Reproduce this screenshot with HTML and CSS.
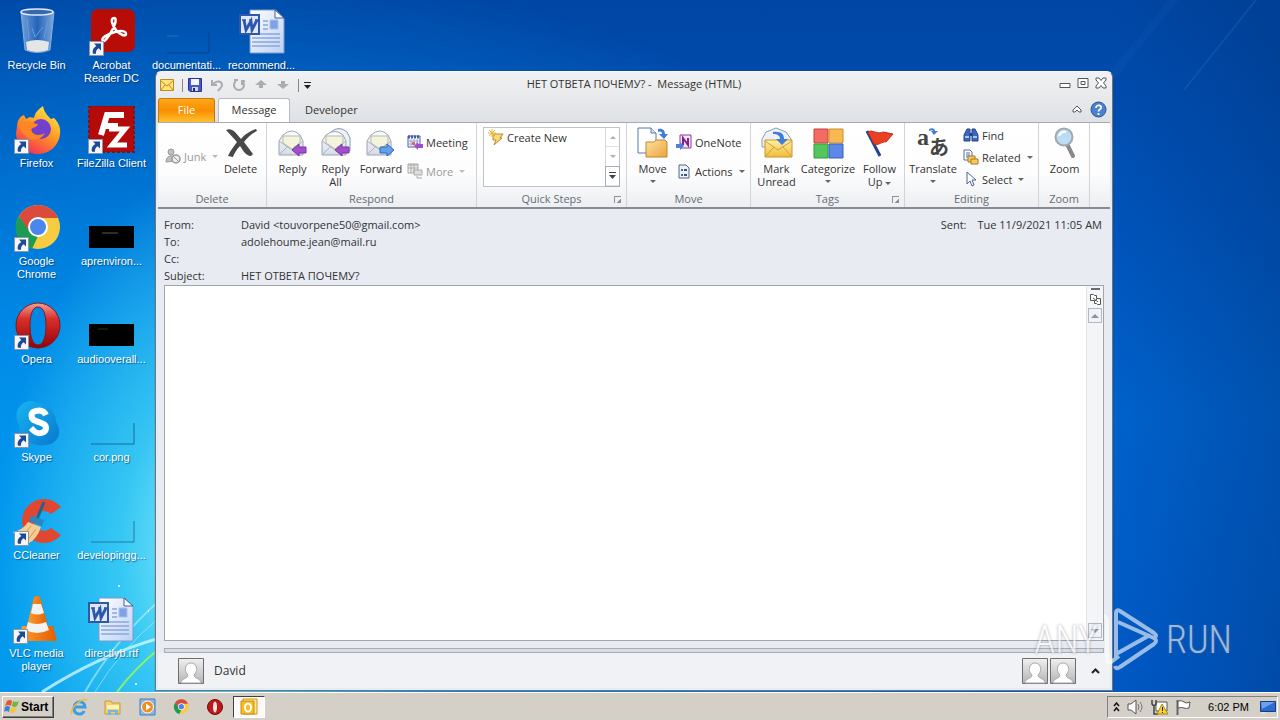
FILE: index.html
```html
<!DOCTYPE html>
<html lang="en">
<head>
  <meta charset="UTF-8">
  <title>НЕТ ОТВЕТА ПОЧЕМУ? - Message (HTML)</title>
  <meta name="viewport" content="width=device-width, initial-scale=1">
  <link rel="stylesheet" href="styles.css">
</head>
<body>

<!-- shared icons -->
<svg class="sprite" aria-hidden="true">
  <defs>
    <linearGradient id="gEnv" x1="0" y1="0" x2="0" y2="1"><stop offset="0" stop-color="#fff"/><stop offset="1" stop-color="#d5dbe6"/></linearGradient>
    <linearGradient id="gGold" x1="0" y1="0" x2="0" y2="1"><stop offset="0" stop-color="#fff0a0"/><stop offset="1" stop-color="#efbd3c"/></linearGradient>
    <linearGradient id="gFolder" x1="0" y1="0" x2="1" y2="1"><stop offset="0" stop-color="#ffe2a0"/><stop offset="1" stop-color="#e9a43c"/></linearGradient>
    <linearGradient id="gOpera" x1="0" y1="0" x2="0" y2="1"><stop offset="0" stop-color="#f0a09a"/><stop offset=".35" stop-color="#d8302a"/><stop offset="1" stop-color="#96000a"/></linearGradient>
    <linearGradient id="gSkype" x1="0" y1="0" x2="1" y2="1"><stop offset="0" stop-color="#18b4f0"/><stop offset="1" stop-color="#0878d0"/></linearGradient>
    <linearGradient id="gFox" x1=".8" y1="0" x2=".2" y2="1"><stop offset="0" stop-color="#fff04a"/><stop offset=".45" stop-color="#ff9a22"/><stop offset="1" stop-color="#f5265a"/></linearGradient>
    <linearGradient id="gCone" x1="0" y1="0" x2="1" y2="0"><stop offset="0" stop-color="#ffa030"/><stop offset="1" stop-color="#e45c00"/></linearGradient>
    <linearGradient id="gDoc" x1="0" y1="0" x2="1" y2="1"><stop offset="0" stop-color="#fff"/><stop offset="1" stop-color="#bcd0f4"/></linearGradient>
    <linearGradient id="gBin" x1="0" y1="0" x2="1" y2="0"><stop offset="0" stop-color="#8eb4e4"/><stop offset=".5" stop-color="#2f68bc"/><stop offset="1" stop-color="#9cc0ec"/></linearGradient>
    <linearGradient id="gPerson" x1="0" y1="0" x2="0" y2="1"><stop offset="0" stop-color="#f0f0f0"/><stop offset="1" stop-color="#b4b4b4"/></linearGradient>
  </defs>

  <symbol id="shortcut" viewBox="0 0 15 15">
    <path d="M.5.5h14v14H.5z" fill="#f4f6fa" stroke="#8a97a8"/>
    <path d="M5 2.500h7v7L9.700 7.300C7.500 8.500 6.800 10 7 12.800H4C3 9 4.500 6.500 7.300 4.900z" fill="#1c4a94"/>
  </symbol>
  <symbol id="word" viewBox="0 0 48 48">
    <path d="M12 2h26l8 8v35H12z" fill="url(#gDoc)" stroke="#7f98c8"/>
    <path d="M37 2v8h9z" fill="#fff" stroke="#3c5a9c"/>
    <path d="M25 13h5M25 17h5M25 21h5M14 26h28M14 30h28M14 34h28M14 38h28" stroke="#8ca6dc" stroke-width="1.500"/>
    <path d="M32 12h8v9h-8z" fill="#7ea2e4" stroke="#a9c0ee"/>
    <path d="M2 7h19v19H2z" fill="#dfe8fa" stroke="#3158a8" stroke-width="2"/>
    <path d="M4 12h4M11 12h3M17 12h3" stroke="#2b57ae" stroke-width="1.500"/>
    <path d="M6 12l2 10 5-9 1 9 5-10" fill="none" stroke="#2b57ae" stroke-width="2.800"/>
  </symbol>
  <symbol id="chrome" viewBox="0 0 48 48">
    <circle cx="25" cy="23" r="22" fill="#f8cc40"/>
    <path d="M25 14h20A22 22 0 0 0 5.900 12L16 29z" fill="#dc4a3c"/>
    <path d="M5.900 12L17 28l8 4-6 13A22 22 0 0 1 5.900 12z" fill="#1c9c52"/>
    <circle cx="25" cy="23" r="10" fill="#fff"/><circle cx="25" cy="23" r="8" fill="#4a86ec"/>
  </symbol>
  <symbol id="opera" viewBox="0 0 48 48">
    <path fill-rule="evenodd" d="M25 1c12 0 22 10 22 22.500S37 46 25 46 3 36 3 23.500 13 1 25 1zm0 4c-6 0-8 9-8 18.500S19 43 25 43s8-10 8-19.500S31 5 25 5z" fill="url(#gOpera)" stroke="#80181c"/>
  </symbol>
  <symbol id="person" viewBox="0 0 26 26">
    <path d="M.5.5h25v25H.5z" fill="url(#gPerson)" stroke="#6e6e6e"/>
    <path d="M3 25c0-5 7-4 7-8-3-3-3-6-2-9 2-4 8-4 10 0 1 3 1 6-2 9 0 4 7 3 7 8z" fill="#fff" stroke="#a8a8a8"/>
  </symbol>
  <symbol id="reply" viewBox="0 0 32 32">
    <path d="M2 14L6 8Q15 0 23 8l3 6v14H2z" fill="url(#gEnv)" stroke="#9aa4b4"/>
    <path d="M6 9h17v7l-8 6-9-6z" fill="#f4f3dc" stroke="#b6bbb2"/>
    <path d="M2 28l9-9M26 28l-9-9M2 14l13 9 11-9" fill="none" stroke="#aeb6c4"/>
    <path d="M15 23l7-6v3h7v6h-7v3z" fill="#a050cc" stroke="#7c34a4"/>
  </symbol>
  <symbol id="replyall" viewBox="0 0 32 32">
    <path d="M6 11L11 5Q19-2 27 5l3 6v13H6z" fill="#eef1f6" stroke="#8c98ac"/>
    <path d="M2 14L6 8Q15 1 23 8l3 6v14H2z" fill="url(#gEnv)" stroke="#9aa4b4"/>
    <path d="M6 9h17v7l-8 6-9-6z" fill="#f4f3dc" stroke="#b6bbb2"/>
    <path d="M2 28l9-9M26 28l-9-9M2 14l13 9 11-9" fill="none" stroke="#aeb6c4"/>
    <path d="M15 23l7-6v3h7v6h-7v3z" fill="#a050cc" stroke="#7c34a4"/>
  </symbol>
  <symbol id="forward" viewBox="0 0 32 32">
    <path d="M2 14L6 8Q15 0 23 8l3 6v14H2z" fill="url(#gEnv)" stroke="#9aa4b4"/>
    <path d="M6 9h17v7l-8 6-9-6z" fill="#f4f3dc" stroke="#b6bbb2"/>
    <path d="M2 28l9-9M26 28l-9-9M2 14l13 9 11-9" fill="none" stroke="#aeb6c4"/>
    <path d="M29 23l-7-6v3h-7v6h7v3z" fill="#62a0ec" stroke="#2f64b8"/>
  </symbol>
</svg>

<main class="desktop">
  <svg class="rays" viewBox="0 0 160 692" preserveAspectRatio="none" aria-hidden="true">
    <path d="M42 692Q100 655 160 638" fill="none" stroke="#d8fbff" stroke-width="3" opacity=".75"/>
    <path d="M85 692Q115 640 160 600" fill="none" stroke="#b4f2fc" stroke-width="2" opacity=".6"/>
    <path d="M95 692Q120 650 160 617" fill="none" stroke="#b4f2fc" opacity=".6"/>
    <path d="M117 692Q135 668 160 648" fill="none" stroke="#8cf06c" stroke-width="2"/>
    <path d="M118 586h2M135 684h2M148 611h1M133 560h1" stroke="#fff" stroke-width="2" opacity=".8"/>
  </svg>
  <svg class="flare" viewBox="0 0 200 120" aria-hidden="true">
    <path d="M200-30L104 90" stroke="#4d9be0" stroke-width="2" opacity=".15"/>
    <path d="M110-20L20 90" stroke="#4d9be0" stroke-width="8" opacity=".05"/>
  </svg>

  <div class="icons">
    <a class="shortcut" href="#">
      <svg class="pic" viewBox="0 0 48 48"><path d="M9 4h33l-4 38q-13 5-25 0z" fill="url(#gBin)" opacity=".8" stroke="#a8c4e8"/><path d="M14 34q11-4 23 0l-1 8q-11 4-21 0z" fill="#e4e6e6"/><path d="M15 11l2 20M20 20l3 9 8-10M36 13l-4 17" stroke="#6c9cdc" fill="none"/><ellipse cx="25" cy="4" rx="16" ry="3" fill="#3a68ac" stroke="#dde9f8" stroke-width="1.500"/></svg>
      <span>Recycle Bin</span>
    </a>
    <a class="shortcut" href="#">
      <svg class="pic" viewBox="0 0 48 48"><rect x="3" y="1" width="44" height="43" rx="7" fill="#b80c06"/><path d="M15 33c-3-3 5-7 12-9 6-2 11-1 11 2s-6 1-10-4-6-12-2-12 0 10-4 16-6 8-7 7z" fill="none" stroke="#fff" stroke-width="2.500"/><use href="#shortcut" x="1" y="33" width="15" height="15"/></svg>
      <span>Acrobat<br>Reader DC</span>
    </a>
    <a class="shortcut" href="#">
      <svg class="pic" viewBox="0 0 48 48"><path d="M4 45h42V24" fill="none" stroke="#083a86" opacity=".8"/><path d="M4 28h12" stroke="#2c6abc"/></svg>
      <span>documentati...</span>
    </a>
    <a class="shortcut" href="#">
      <svg class="pic"><use href="#word"/></svg>
      <span>recommend...</span>
    </a>

    <a class="shortcut" href="#">
      <svg class="pic" viewBox="0 0 48 48"><path d="M4 21c0-5 2-9 5-11l2-1 2 4c3-2 5-2 8-1 1-6 5-9 9-12 1 6 4 9 8 13l3-1c4 4 7 9 6 16-1 11-10 20-22 20S3 39 3 27z" fill="url(#gFox)"/><circle cx="28" cy="23" r="10" fill="#7340cc"/><path d="M5 14c3 2 6 1 9 2 4-2 7 2 11 2-1 4-6 3-7 6 2 6 9 6 14 3-4 8-15 9-20 2-3-2-7-9-7-15z" fill="#ff8624"/><use href="#shortcut" x="1" y="33" width="15" height="15"/></svg>
      <span>Firefox</span>
    </a>
    <a class="shortcut" href="#">
      <svg class="pic" viewBox="0 0 48 48"><path d="M2 0h45v46H2z" fill="#b40a0a" stroke="#861018" stroke-width="2" stroke-dasharray="3 2"/><path d="M14 29L20 9h17M17 20h14" fill="none" stroke="#fff" stroke-width="6"/><path d="M22 23h16L25 39h15" fill="none" stroke="#fff" stroke-width="5"/><use href="#shortcut" x="1" y="33" width="15" height="15"/></svg>
      <span>FileZilla Client</span>
    </a>
    <a class="shortcut row3" href="#">
      <svg class="pic" viewBox="0 0 48 48"><use href="#chrome"/><use href="#shortcut" x="1" y="33" width="15" height="15"/></svg>
      <span>Google<br>Chrome</span>
    </a>
    <a class="shortcut" href="#">
      <svg class="pic" viewBox="0 0 48 48"><path d="M1 22h45v22H1z" fill="#000"/><path d="M14 29h16" stroke="#5c5c4a"/></svg>
      <span>aprenviron...</span>
    </a>
    <a class="shortcut row4" href="#">
      <svg class="pic" viewBox="0 0 48 48"><use href="#opera"/><use href="#shortcut" x="1" y="33" width="15" height="15"/></svg>
      <span>Opera</span>
    </a>
    <a class="shortcut" href="#">
      <svg class="pic" viewBox="0 0 48 48"><path d="M1 22h45v22H1z" fill="#000"/><path d="M10 27h10" stroke="#1d3c1d"/></svg>
      <span>audiooverall...</span>
    </a>
    <a class="shortcut row5" href="#">
      <svg class="pic" viewBox="0 0 48 48"><path d="M13 2c5-2 9-1 12 1 10 0 18 8 18 19 7 10 2 22-11 23-12 2-26-6-26-20C1 16 4 5 13 2z" fill="url(#gSkype)"/><path d="M33 15c-2-4-6-5-10-4-6 1-6 8 0 10 4 2 10 2 10 7s-8 7-12 3l-3-3" fill="none" stroke="#fff" stroke-width="6"/><use href="#shortcut" x="1" y="33" width="15" height="15"/></svg>
      <span>Skype</span>
    </a>
    <a class="shortcut" href="#">
      <svg class="pic" viewBox="0 0 48 48"><path d="M3 44h43V23" fill="none" stroke="#146c9c"/></svg>
      <span>cor.png</span>
    </a>
    <a class="shortcut row6" href="#">
      <svg class="pic" viewBox="0 0 48 48"><path d="M48 9A22 22 0 1 0 48 37L38 30a10 10 0 1 1 0-14z" fill="#e04630"/><path d="M31 4L24 21" stroke="#26608e" stroke-width="3"/><path d="M18 18l13 4-2 6-13-5z" fill="#2888bc"/><path d="M15 24l13 5q-4 12-12 16Q4 42 0 34q10-2 15-10z" fill="#f5cc94"/><path d="M18 28l-8 10M23 31l-9 12" stroke="#d69a54"/><use href="#shortcut" x="1" y="33" width="15" height="15"/></svg>
      <span>CCleaner</span>
    </a>
    <a class="shortcut" href="#">
      <svg class="pic" viewBox="0 0 48 48"><path d="M3 44h43V23" fill="none" stroke="#1c7ca4"/></svg>
      <span>developingg...</span>
    </a>
    <a class="shortcut row7" href="#">
      <svg class="pic" viewBox="0 0 48 48"><path d="M10 30h31l4 15H6z" fill="url(#gCone)"/><path d="M22 1q3-2 6 0l9 33q-12 7-23 0z" fill="url(#gCone)"/><path d="M21 8h8l3 9q-7 3-13 0zM16 26q9 4 18 0l3 8q-12 6-23 0z" fill="#f2f2f2"/><use href="#shortcut" x="1" y="33" width="15" height="15"/></svg>
      <span>VLC media<br>player</span>
    </a>
    <a class="shortcut" href="#">
      <svg class="pic"><use href="#word"/></svg>
      <span>directlyb.rtf</span>
    </a>
  </div>

  <section class="window">
    <header class="titlebar">
      <div class="quick">
        <svg width="14" height="12" viewBox="0 0 14 12"><path d="M.5.5h13v11H.5z" fill="#ffe47c" stroke="#c08c20"/><path d="M1 2l6 5 6-5M1 11l4-5M13 11L9 6" fill="none" stroke="#c08c20"/></svg>
        <i class="bar"></i>
        <button aria-label="Save"><svg width="14" height="14" viewBox="0 0 14 14"><path d="M.5.5h13v13H2l-1.500-1.500z" fill="#4858c4" stroke="#2c3490"/><path d="M3 1h8v6H3z" fill="#f0f4ff"/><path d="M4 9h6v4H4z" fill="#d0d6ea"/><path d="M5 10h2v3H5z" fill="#20286c"/></svg></button>
        <button aria-label="Undo"><svg width="14" height="14" viewBox="0 0 14 14"><path d="M2 2v5h5M3 6c4-4 9-3 9 1 0 3-3 4-4 6" fill="none" stroke="#a9adb2" stroke-width="2"/></svg></button>
        <button aria-label="Redo"><svg width="14" height="14" viewBox="0 0 14 14"><path d="M4 3a5 5 0 1 0 6 0M10 7V3h3M2 2h4" fill="none" stroke="#a9adb2" stroke-width="2"/></svg></button>
        <button aria-label="Previous"><svg width="14" height="14" viewBox="0 0 14 14"><path d="M7 2l6 5H9v3H5V7H1z" fill="#a9adb2"/></svg></button>
        <button aria-label="Next"><svg width="14" height="14" viewBox="0 0 14 14"><path d="M7 11l6-5H9V3H5v3H1z" fill="#a9adb2"/></svg></button>
        <i class="bar"></i>
        <button class="customize" aria-label="Customize"><svg width="7" height="7" viewBox="0 0 7 7"><path d="M0 0h7v1H0zM0 3h7L3.500 7z" fill="#222"/></svg></button>
      </div>
      <h1>НЕТ ОТВЕТА ПОЧЕМУ? -&nbsp; Message (HTML)</h1>
      <div class="controls">
        <button aria-label="Minimize"><svg width="12" height="12" viewBox="0 0 12 12"><path d="M1 6.500h10v4H1z" fill="#fff" stroke="#50565e"/></svg></button>
        <button aria-label="Maximize"><svg width="12" height="12" viewBox="0 0 12 12"><path d="M1 1.500h10v9H1z" fill="#fff" stroke="#50565e"/><path d="M4 4.500h4v3H4z" fill="none" stroke="#50565e"/></svg></button>
        <button aria-label="Close"><svg width="12" height="12" viewBox="0 0 12 12"><path d="M1 1h3l2 2.500L8 1h3v2L8.500 6 11 9v2H8L6 8.500 4 11H1V9l2.500-3L1 3z" fill="#fff" stroke="#50565e"/></svg></button>
      </div>
    </header>

    <nav class="tabs">
      <button class="tab file">File</button>
      <button class="tab active">Message</button>
      <button class="tab">Developer</button>
      <div class="tabs-end">
        <button aria-label="Collapse ribbon"><svg width="10" height="8" viewBox="0 0 10 8"><path d="M5 1l4 4v2H7L5 5 3 7H1V5z" fill="#fff" stroke="#50565e"/></svg></button>
        <button aria-label="Help"><svg width="17" height="17" viewBox="0 0 17 17"><circle cx="8.500" cy="8.500" r="7.500" fill="#4c80d0" stroke="#2c5098"/><path d="M6 7c0-4 6-3 5 0-.5 1.500-2.500 1.500-2.500 3.500M8.500 12v2" fill="none" stroke="#fff" stroke-width="1.800"/></svg></button>
      </div>
    </nav>

    <div class="ribbon">
      <section class="group g-delete">
        <div class="tools">
          <div class="stack">
            <button class="small" disabled><svg class="ico" viewBox="0 0 16 16"><circle cx="6" cy="4" r="3" fill="#c0c0c0" stroke="#999"/><path d="M1 14c0-8 10-8 10-1z" fill="#c0c0c0" stroke="#999"/><circle cx="11" cy="11" r="4" fill="#eee" stroke="#999" stroke-width="1.500"/><path d="M8 8l6 6" stroke="#999"/></svg>Junk<i class="caret"></i></button>
          </div>
          <button class="large"><svg class="big" viewBox="0 0 32 32"><path d="M1 3c4-2 7 0 9 2l6 7C19 8 25 4 31 2l1 2c-6 3-10 7-13 11l9 12-2 2c-3 0-5-2-7-4l-4-6c-4 4-6 8-7 11l-5-1c2-5 6-10 9-14z" fill="#484848"/></svg><span>Delete</span></button>
        </div>
        <h2>Delete</h2>
      </section>

      <section class="group g-respond">
        <div class="tools">
          <button class="large"><svg class="big"><use href="#reply"/></svg><span>Reply</span></button>
          <button class="large"><svg class="big"><use href="#replyall"/></svg><span>Reply<br>All</span></button>
          <button class="large wide"><svg class="big"><use href="#forward"/></svg><span>Forward</span></button>
          <div class="stack">
            <button class="small"><svg class="ico" viewBox="0 0 16 16"><path d="M1 2h12v11H1z" fill="#fff" stroke="#4858b0"/><path d="M1 3h12" stroke="#4858b0" stroke-width="3" stroke-dasharray="2 1"/><path d="M1 7h12M1 10h12M4 5v8M7 5v8M10 5v8" stroke="#90a0dc"/><path d="M5 8h3v3H5z" fill="#e46858"/><path d="M7 12l4-4v2h5v4h-5v2z" fill="#a050cc"/></svg>Meeting</button>
            <button class="small" disabled><svg class="ico" viewBox="0 0 16 16"><path d="M1 1h10v9H1z" fill="#eee" stroke="#aaa"/><path d="M1 2h10M1 5h10M4 1v9M7 1v9" stroke="#aaa"/><path d="M7 7h8v5H7z" fill="#ddd" stroke="#aaa"/><path d="M10 13v2h5" stroke="#aaa" fill="none"/></svg>More<i class="caret"></i></button>
          </div>
        </div>
        <h2>Respond</h2>
      </section>

      <section class="group g-steps">
        <div class="tools">
          <div class="gallery">
            <button class="small"><svg class="ico" viewBox="0 0 16 16"><path d="M5 5h10l-3 4h2l-8 7 2-5H5z" fill="#fbd87c" stroke="#b88c28"/><path d="M4 0v8M0 4h8M1 1l6 6M7 1L1 7" stroke="#e6b92c"/></svg>Create New</button>
            <div class="gallery-nav">
              <button aria-label="Up"><i class="tri up"></i></button>
              <button aria-label="Down"><i class="tri"></i></button>
              <button class="on" aria-label="More steps"><svg width="7" height="7" viewBox="0 0 7 7"><path d="M0 0h7v1H0zM0 3h7L3.500 7z" fill="#444"/></svg></button>
            </div>
          </div>
        </div>
        <h2>Quick Steps</h2>
        <button class="launcher" aria-label="Manage quick steps"></button>
      </section>

      <section class="group g-move">
        <div class="tools">
          <button class="large"><svg class="big" viewBox="0 0 32 32"><path d="M1 1h13l5 5v20H1z" fill="#fff" stroke="#5878b0"/><path d="M14 1v5h5" fill="#d8e4f8" stroke="#5878b0"/><path d="M9 15h8l2-2h9l2 2v15H9z" fill="url(#gFolder)" stroke="#c48428"/><path d="M21 2c5-1 7 2 7 5h3l-4 5-5-5h3c0-2-1-3-4-2z" fill="#3f7cdc"/></svg><span>Move</span><i class="caret"></i></button>
          <div class="stack">
            <button class="small"><svg class="ico" viewBox="0 0 16 16"><path d="M4 1h11v13H4z" fill="#f4e6f6" stroke="#8c3a9c"/><path d="M7 11V4l5 7V4" fill="none" stroke="#80208c" stroke-width="2"/><path d="M0 10h4V8l4 4-4 4v-2H0z" fill="#4c80dc"/></svg>OneNote</button>
            <button class="small"><svg class="ico" viewBox="0 0 16 16"><path d="M3 2h7l3 3v10H3z" fill="#eef2fa" stroke="#506488"/><path d="M5 6h2v2H5zM5 11h2v2H5z" fill="#3c68b4"/><path d="M8 7h3M8 12h3" stroke="#3c5078" stroke-width="2"/></svg>Actions<i class="caret"></i></button>
          </div>
        </div>
        <h2>Move</h2>
      </section>

      <section class="group g-tags">
        <div class="tools">
          <button class="large"><svg class="big" viewBox="0 0 32 32"><path d="M1 12L5 5l10-4 10 4 5 7v8H1z" fill="#edf0f6" stroke="#8c9cb4"/><path d="M4 13h27v17H4z" fill="url(#gGold)" stroke="#c8962c"/><path d="M4 14l13 9 14-9M4 30l9-10M31 30l-9-10" fill="none" stroke="#cda03c"/><path d="M12 5c9-1 11 3 11 7h4l-6 6-6-6h4c0-3-2-5-7-5z" fill="#3f7cdc"/></svg><span>Mark<br>Unread</span></button>
          <button class="large widest"><svg class="big" viewBox="0 0 32 32"><path d="M2 2h14v14H2z" fill="#f26c64" stroke="#c8403c"/><path d="M17 2h14v14H17z" fill="#f8b850" stroke="#cc8c2c"/><path d="M2 17h14v14H2z" fill="#54c45c" stroke="#309c3c"/><path d="M17 17h14v14H17z" fill="#5c88e8" stroke="#3860c0"/></svg><span>Categorize</span><i class="caret"></i></button>
          <button class="large"><svg class="big" viewBox="0 0 32 32"><path d="M3 4l13 25" stroke="#26448c" stroke-width="3"/><path d="M4 5l3-1c5 1 8 3 12 1l10 2-7 8c-4-1-7 4-12 2z" fill="#ec4024" stroke="#c02c18"/></svg><span>Follow<br>Up<i class="caret"></i></span></button>
        </div>
        <h2>Tags</h2>
        <button class="launcher" aria-label="Message options"></button>
      </section>

      <section class="group g-editing">
        <div class="tools">
          <button class="large wide"><span class="big glyphs"><b>a</b><b lang="ja">あ</b><svg viewBox="0 0 10 8"><path d="M1 2c4-2 6 0 6 2h3L6 8 3 4h2c0-1-2-1-4 0z" fill="#3f7cdc"/></svg></span><span>Translate</span><i class="caret"></i></button>
          <div class="stack tight">
            <button class="small"><svg class="ico" viewBox="0 0 16 16"><path d="M1 14V8l3-6h3v12zM9 14V2h3l3 6v6z" fill="#3c68c0" stroke="#244088"/><path d="M7 6h2v3H7z" fill="#244088"/><path d="M2 10h4M10 10h4" stroke="#a8c4f4" stroke-width="2"/></svg>Find</button>
            <button class="small"><svg class="ico" viewBox="0 0 16 16"><path d="M1 1h6l2 2v8H1z" fill="#fff" stroke="#5070a8"/><path d="M3 4h4M3 6h4M3 8h4" stroke="#5070a8"/><path d="M5 7h7v6H5z" fill="#f8cc64" stroke="#a47818"/><path d="M8 10h7v5H8z" fill="#f8cc64" stroke="#a47818"/></svg>Related<i class="caret"></i></button>
            <button class="small"><svg class="ico" viewBox="0 0 16 16"><path d="M4 1v12l3-3 2 5 2-1-2-5h4z" fill="#fff" stroke="#4c6494"/></svg>Select<i class="caret"></i></button>
          </div>
        </div>
        <h2>Editing</h2>
      </section>

      <section class="group g-zoom">
        <div class="tools">
          <button class="large"><svg class="big" viewBox="0 0 32 32"><path d="M18 17l6 12" stroke="#888" stroke-width="4" stroke-linecap="round"/><circle cx="15" cy="10" r="8.500" fill="#bcdcf6" stroke="#a0a8b0" stroke-width="2"/><path d="M10 9q2-5 7-4" fill="none" stroke="#fff" stroke-width="2"/></svg><span>Zoom</span></button>
        </div>
        <h2>Zoom</h2>
      </section>
    </div>

    <div class="message">
      <div class="headers">
        <dl>
          <dt>From:</dt><dd>David &lt;touvorpene50@gmail.com&gt;</dd>
          <dt>To:</dt><dd>adolehoume.jean@mail.ru</dd>
          <dt>Cc:</dt><dd></dd>
          <dt>Subject:</dt><dd>НЕТ ОТВЕТА ПОЧЕМУ?</dd>
        </dl>
        <p class="sent"><span>Sent:</span><span>Tue 11/9/2021 11:05 AM</span></p>
      </div>
      <div class="mail-body">
        <div class="text"></div>
        <div class="scroll">
          <div class="split"></div>
          <button aria-label="Select browse object"><svg width="13" height="13" viewBox="0 0 13 13"><path d="M1.500 1.500h3l1 1h2v3h4v6h-3l-1-1h-2v-3h-4z" fill="#fff" stroke="#555"/><path d="M4 5l5 4M6 8l3-3" stroke="#555"/></svg></button>
          <button class="arrow" aria-label="Scroll up"><i class="tri up"></i></button>
          <div class="track"></div>
          <button class="arrow" aria-label="Scroll down"><i class="tri"></i></button>
        </div>
      </div>
      <div class="splitter"></div>
    </div>

    <footer class="people">
      <svg class="avatar"><use href="#person"/></svg>
      <span class="name">David</span>
      <svg class="avatar"><use href="#person"/></svg>
      <svg class="avatar"><use href="#person"/></svg>
      <button aria-label="Expand people pane"><svg width="9" height="6" viewBox="0 0 9 6"><path d="M1 5l3.500-3.500L8 5" fill="none" stroke="#222" stroke-width="2"/></svg></button>
    </footer>
  </section>

  <div class="watermark">
    <span>ANY</span>
    <svg viewBox="0 0 56 64"><path d="M3 12v40q0 4 4 2l8-6M3 12q-2-5-4-4M12 24V5q0-4 4-2l34 22q4 3 0 5L14 14M12 22v24l34-19M50 30q4 3 0 6L16 59q-4 3-5-1" fill="none" stroke="#fff" stroke-width="4"/></svg>
    <span>RUN</span>
  </div>
</main>

<footer class="taskbar">
  <button class="start"><svg width="16" height="16" viewBox="0 0 16 16"><path d="M3 2q3-2 5 0L7 7Q4 5 1 7z" fill="#e8542c"/><path d="M9 2q3 2 6 0l-2 5q-3 2-5 0z" fill="#6cb83c"/><path d="M1 8q3-2 5 0l-1 5q-3-2-5 0z" fill="#3c80d8"/><path d="M7 8q3 2 6 0l-2 5q-3 2-5 0z" fill="#f8c43c"/></svg>Start</button>
  <button class="task" aria-label="Internet Explorer"><svg width="18" height="18" viewBox="0 0 18 18"><path d="M4 9h11c0-7-11-7-11 1s9 7 10 3" fill="none" stroke="#3c9ce4" stroke-width="3"/><path d="M2 16C-1 11 12-1 17 2" fill="none" stroke="#f0bc34" stroke-width="1.500"/></svg></button>
  <button class="task" aria-label="Explorer"><svg width="18" height="18" viewBox="0 0 18 18"><path d="M1 3h6l1 2h8v11H1z" fill="#f4d070" stroke="#c49c3c"/><path d="M3 7h12v4H3z" fill="#fbf2b8"/><path d="M4 17v-5h10v5h-3v-3H7v3z" fill="#70b8e8"/></svg></button>
  <button class="task" aria-label="Media Player"><svg width="18" height="18" viewBox="0 0 18 18"><path d="M2 1h15v16H2z" fill="#88b8e4" stroke="#4080c0"/><circle cx="9.500" cy="9" r="6" fill="#f48c1c" stroke="#fff"/><path d="M8 5.500v7l5-3.500z" fill="#fff"/></svg></button>
  <button class="task" aria-label="Chrome"><svg width="16" height="16"><use href="#chrome"/></svg></button>
  <button class="task" aria-label="Opera"><svg width="18" height="18" viewBox="0 0 18 18"><circle cx="9" cy="9" r="7.500" fill="#c01818" stroke="#700808"/><ellipse cx="9" cy="9" rx="2" ry="5.500" fill="#f8e4e0"/></svg></button>
  <button class="task current" aria-label="Outlook"><svg width="18" height="18" viewBox="0 0 18 18"><path d="M3 1h14v15H3z" fill="#ffe890" stroke="#cc9414"/><path d="M1 3h13v13H1z" fill="#f8bc20" stroke="#cc8c10"/><ellipse cx="8" cy="9.500" rx="3" ry="4" fill="none" stroke="#fff" stroke-width="2"/></svg></button>
  <div class="tray">
    <button aria-label="Show hidden icons"><svg width="7" height="10" viewBox="0 0 7 10"><path d="M1 4l2.500-3L6 4M1 9l2.500-3L6 9" fill="none" stroke="#111" stroke-width="1.500"/></svg></button>
    <button aria-label="Volume"><svg width="17" height="16" viewBox="0 0 17 16"><path d="M1 5h3l5-4v14l-5-4H1z" fill="#fff" stroke="#555"/><path d="M11 5q2 3 0 6M13 3q4 5 0 10" fill="none" stroke="#777"/></svg></button>
    <button aria-label="Network"><svg width="17" height="16" viewBox="0 0 17 16"><path d="M5 3h11v9H5z" fill="#fff" stroke="#555"/><path d="M1 1v4q2 3 4 0V1M3 6v9h4" fill="none" stroke="#444" stroke-width="1.500"/><path d="M11 5l6 10H6z" fill="#f8d42c" stroke="#a88810"/><path d="M11.500 8v4M11.500 13v1" stroke="#222"/></svg></button>
    <button aria-label="Action Center"><svg width="17" height="16" viewBox="0 0 17 16"><path d="M2.500 1v15" stroke="#666" stroke-width="2"/><path d="M3 2q4-1 6 1t6 0l-1 6q-3 1-5 0t-6 0z" fill="#fff" stroke="#555"/></svg></button>
    <time>6:02 PM</time>
    <button aria-label="Show desktop"><svg width="16" height="14" viewBox="0 0 16 14"><path d="M.5 1.500h15v10H.5z" fill="#2c6cd0" stroke="#183c80"/><path d="M1 2h14L2 9z" fill="#6ca4ec"/><path d="M1 13h5" stroke="#eee"/></svg></button>
  </div>
</footer>

</body>
</html>
```

FILE: styles.css
```css
* {
  box-sizing: border-box;
}

body {
  margin: 0;
  height: 100vh;
  display: flex;
  flex-direction: column;
  overflow: hidden;
  font-family: "Open Sans", "Noto Sans", sans-serif;
  font-size: 11px;
  line-height: 13px;
  color: #333;
}

button {
  margin: 0;
  padding: 0;
  border: 0;
  background: none;
  font: inherit;
  color: inherit;
}

h1, h2, p, dl, dd {
  margin: 0;
  font-size: 11px;
  font-weight: normal;
}

svg {
  display: block;
  flex: none;
}

.sprite {
  position: absolute;
  width: 0;
  height: 0;
}

/* desktop */
.desktop {
  position: relative;
  flex: 1;
  min-height: 0;
  overflow: hidden;
  background:
    radial-gradient(ellipse 220px 380px at 220px 550px, rgba(160, 246, 250, 0.95), rgba(80, 220, 246, 0.65) 45%, transparent),
    radial-gradient(ellipse 900px 640px at 200px 600px, #06aaf4, rgba(0, 150, 240, 0.8) 45%, transparent),
    linear-gradient(to right, transparent 87%, rgba(0, 50, 120, 0.35)),
    linear-gradient(to bottom, #0046a4, #0052b8 30%, #0062cc 60%, #0058c4);
}

.rays {
  position: absolute;
  left: 0;
  top: 0;
  width: 160px;
  height: 100%;
}

.flare {
  position: absolute;
  right: 0;
  top: 0;
  width: 200px;
  height: 120px;
}

.icons {
  position: relative;
  display: grid;
  grid-template-columns: repeat(4, 73px);
  grid-auto-rows: 98px;
  column-gap: 2px;
  justify-items: center;
}

.shortcut {
  display: flex;
  flex-direction: column;
  align-items: center;
  gap: 3px;
  padding-top: 8px;
  color: #fff;
  font-family: "Liberation Sans", sans-serif;
  text-align: center;
  text-decoration: none;
  text-shadow: 1px 1px 1px rgba(0, 30, 80, 0.6);
  white-space: nowrap;
}

.row3, .row4, .row5, .row6, .row7 {
  grid-column: 1;
}

.pic {
  width: 48px;
  height: 48px;
}

/* message window */
.window {
  position: absolute;
  left: 155px;
  right: 167px;
  top: 71px;
  bottom: 1px;
  display: flex;
  flex-direction: column;
  padding: 0 2px 2px;
  border: 1px solid #70767e;
  border-top-color: #f8f8f8;
  border-radius: 6px 6px 0 0;
  background: linear-gradient(to bottom, #f0f1f2, #dfe2e5 50px, #e8ebf1 60px);
  box-shadow: 0 0 1px #334;
}

.titlebar {
  display: grid;
  grid-template-columns: 1fr auto 1fr;
  height: 26px;
}

.titlebar h1 {
  line-height: 24px;
}

.quick {
  display: flex;
  align-items: center;
  gap: 8px;
  padding-left: 2px;
}

.bar {
  width: 1px;
  height: 13px;
  background: #888;
}

.bar + button {
  margin-left: -3px;
}

.controls {
  display: flex;
  align-items: center;
  justify-content: flex-end;
  gap: 6px;
  padding: 0 3px 4px 0;
}

.tabs {
  display: flex;
  height: 24px;
}

.tab {
  padding: 0 15px 2px;
}

.tab.file {
  width: 57px;
  margin-right: 3px;
  border: 1px solid #c87810;
  border-bottom: 0;
  border-radius: 3px 3px 0 0;
  background: linear-gradient(to bottom, #ffa818, #f88e00 50%, #ffc030);
  color: #fff;
}

.tab.active {
  width: 72px;
  padding: 0 0 2px;
  border: 1px solid #b8bcc2;
  border-bottom: 0;
  border-radius: 3px 3px 0 0;
  background: #fff;
}

.tabs-end {
  display: flex;
  align-items: center;
  gap: 8px;
  margin-left: auto;
  padding: 0 3px 2px 0;
}

.ribbon {
  display: flex;
  height: 87px;
  border: 1px solid #a8acb2;
  border-width: 1px 0 2px;
  border-bottom-color: #878c94;
  background: linear-gradient(to bottom, #fff, #fdfdfe 60%, #eceef1);
}

.group {
  position: relative;
  display: flex;
  flex-direction: column;
  border-right: 1px solid #d0d4d8;
}

.group h2 {
  color: #666c74;
  line-height: 16px;
  text-align: center;
}

.g-delete { width: 109px; }
.g-respond { width: 210px; }
.g-steps { width: 150px; }
.g-move { width: 124px; }
.g-tags { width: 154px; }
.g-editing { width: 134px; }
.g-zoom { width: 51px; }

.tools {
  flex: 1;
  display: flex;
  padding: 4px 4px 0;
}

.large {
  width: 43px;
  display: flex;
  flex-direction: column;
  align-items: center;
  flex: none;
}

.large.wide {
  width: 48px;
}

.large.widest {
  width: 60px;
}

.g-delete .tools {
  justify-content: space-between;
}

.big {
  width: 32px;
  height: 32px;
  margin-bottom: 3px;
}

.large > .caret {
  margin: 5px 0 0;
}

.glyphs {
  position: relative;
  display: flex;
  color: #444;
  font-family: "Liberation Serif", "Noto Sans CJK JP", serif;
  font-size: 24px;
  line-height: 20px;
}

.glyphs b:last-of-type {
  margin-top: 11px;
  font-size: 20px;
}

.glyphs svg {
  position: absolute;
  left: 11px;
  top: 0;
  width: 10px;
  height: 8px;
}

.stack {
  display: flex;
  flex-direction: column;
  align-items: flex-start;
  gap: 13px;
  padding: 7px 0 0 2px;
}

.stack.tight {
  gap: 6px;
  padding: 0 0 0 6px;
}

.g-delete .stack {
  padding: 21px 0 0 3px;
}

.small {
  display: flex;
  align-items: center;
  gap: 3px;
  height: 16px;
  white-space: nowrap;
}

.small:disabled {
  color: #999;
}

.ico {
  width: 16px;
  height: 16px;
}

.caret {
  display: inline-block;
  margin-left: 3px;
  border: 3px solid transparent;
  border-top-color: #666;
  border-bottom: 0;
  vertical-align: middle;
}

.small:disabled .caret {
  border-top-color: #bbb;
}

.gallery {
  display: flex;
  justify-content: space-between;
  width: 137px;
  height: 60px;
  margin-left: 2px;
  border: 1px solid #c0c4ca;
  background: #fff;
}

.gallery .small {
  padding-left: 4px;
  height: 18px;
}

.gallery-nav {
  display: grid;
  grid-template-rows: repeat(3, 1fr);
  width: 14px;
  border-left: 1px solid #d4d8dc;
}

.gallery-nav button {
  display: grid;
  place-items: center;
  border-bottom: 1px solid #e0e2e6;
}

.gallery-nav .on {
  outline: 1px solid #a8acb4;
}

.tri {
  border: 3px solid transparent;
  border-top-color: #aab0b8;
  border-bottom: 0;
}

.tri.up {
  border-top: 0;
  border-bottom: 3px solid #aab0b8;
}

.launcher {
  position: absolute;
  right: 5px;
  bottom: 4px;
  width: 7px;
  height: 7px;
  border: 1px solid #8c9298;
  border-width: 1px 0 0 1px;
  background: linear-gradient(135deg, transparent 60%, #8c9298 60%);
}

/* mail */
.message {
  flex: 1;
  display: flex;
  flex-direction: column;
  padding: 7px 6px 0;
  background: #e8ebf2;
}

.headers {
  display: flex;
  justify-content: space-between;
  padding-bottom: 1px;
  line-height: 17px;
}

.headers dl {
  display: grid;
  grid-template-columns: 77px auto;
  grid-auto-rows: 17px;
}

.sent {
  display: flex;
  gap: 11px;
  padding-right: 2px;
}

.mail-body {
  flex: 1;
  display: flex;
  border: 1px solid #a0a4ac;
  background: #fff;
}

.text {
  flex: 1;
}

.scroll {
  display: flex;
  flex-direction: column;
  align-items: center;
  width: 17px;
  padding: 2px 0;
  border-left: 1px solid #e4e4e8;
  background: #f4f5f7;
}

.split {
  width: 9px;
  height: 2px;
  margin-bottom: 3px;
  background: #666c74;
}

.arrow {
  display: grid;
  place-items: center;
  width: 14px;
  height: 15px;
  margin-top: 2px;
  border: 1px solid #b4b8c4;
  background: #f0f2f8;
}

.arrow .tri {
  border-width: 4px;
  border-bottom-width: 0;
  border-top-color: #8a92a8;
}

.arrow .tri.up {
  border-top-width: 0;
  border-bottom-width: 4px;
  border-bottom-color: #8a92a8;
}

.track {
  flex: 1;
}

.splitter {
  height: 5px;
  margin-top: 7px;
  border: 1px solid #a8acb4;
  background: #d8dce4;
}

.people {
  display: flex;
  align-items: center;
  gap: 2px;
  height: 35px;
  padding: 0 10px 0 20px;
  background: #f1f2f5;
}

.avatar {
  width: 26px;
  height: 26px;
}

.name {
  margin: 0 auto 0 8px;
  font-size: 12px;
}

.people button {
  margin-left: 13px;
}

.watermark {
  position: absolute;
  right: 48px;
  bottom: 20px;
  display: flex;
  align-items: center;
  gap: 6px;
  color: #fff;
  font-family: "Roboto Condensed", "Liberation Sans Narrow", Roboto, sans-serif;
  font-size: 38px;
  font-weight: 300;
  line-height: 60px;
  opacity: 0.6;
  text-shadow: 0 0 3px #667;
}

.watermark svg {
  width: 56px;
  height: 64px;
}

/* taskbar */
.taskbar {
  display: flex;
  align-items: center;
  height: 28px;
  padding: 2px 2px 1px;
  border-top: 1px solid #fff;
  background: #d4d0c8;
  font-family: "Liberation Sans", sans-serif;
  color: #000;
}

.start {
  display: flex;
  align-items: center;
  gap: 1px;
  width: 52px;
  height: 22px;
  margin-right: 9px;
  padding-left: 1px;
  border: 1px solid #fff;
  border-right-color: #404040;
  border-bottom-color: #404040;
  box-shadow: inset -1px -1px #808080;
  font-weight: bold;
  font-size: 12px;
}

.task {
  display: grid;
  place-items: center;
  width: 32px;
  height: 22px;
  margin-right: 2px;
}

.task.current {
  border: 1px solid #fff;
  border-top-color: #404040;
  border-left-color: #404040;
  background: #fbfaf8;
}

.tray {
  display: flex;
  align-items: center;
  gap: 7px;
  height: 22px;
  margin-left: auto;
  padding: 0 1px 0 5px;
  border: 1px solid #fff;
  border-top-color: #808080;
  border-left-color: #808080;
}

.tray time {
  margin: 0 4px 0 9px;
}
```
